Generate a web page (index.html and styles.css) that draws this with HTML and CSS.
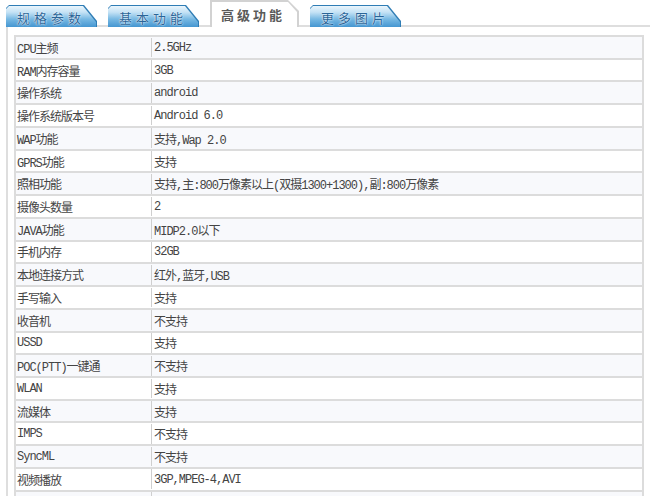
FILE: index.html
```html
<!DOCTYPE html>
<html lang="zh">
<head>
<meta charset="utf-8">
<title>参数</title>
<link rel="stylesheet" href="styles.css">
</head>
<body>
<div class="tabs">
  <div class="tab"><span class="tab-face">规格参数</span></div>
  <div class="tab"><span class="tab-face">基本功能</span></div>
  <div class="tab tab-active"><span class="tab-face">高级功能</span></div>
  <div class="tab"><span class="tab-face">更多图片</span></div>
</div>
<div class="panel">
  <div class="spec">
    <div class="row"><div class="k">CPU主频</div><div class="v">2.5GHz</div></div>
    <div class="row"><div class="k">RAM内存容量</div><div class="v">3GB</div></div>
    <div class="row"><div class="k">操作系统</div><div class="v">android</div></div>
    <div class="row"><div class="k">操作系统版本号</div><div class="v">Android 6.0</div></div>
    <div class="row"><div class="k">WAP功能</div><div class="v">支持,Wap 2.0</div></div>
    <div class="row"><div class="k">GPRS功能</div><div class="v">支持</div></div>
    <div class="row"><div class="k">照相功能</div><div class="v">支持,主:800万像素以上(双摄1300+1300),副:800万像素</div></div>
    <div class="row"><div class="k">摄像头数量</div><div class="v">2</div></div>
    <div class="row"><div class="k">JAVA功能</div><div class="v">MIDP2.0以下</div></div>
    <div class="row"><div class="k">手机内存</div><div class="v">32GB</div></div>
    <div class="row"><div class="k">本地连接方式</div><div class="v">红外,蓝牙,USB</div></div>
    <div class="row"><div class="k">手写输入</div><div class="v">支持</div></div>
    <div class="row"><div class="k">收音机</div><div class="v">不支持</div></div>
    <div class="row"><div class="k">USSD</div><div class="v">支持</div></div>
    <div class="row"><div class="k">POC(PTT)一键通</div><div class="v">不支持</div></div>
    <div class="row"><div class="k">WLAN</div><div class="v">支持</div></div>
    <div class="row"><div class="k">流媒体</div><div class="v">支持</div></div>
    <div class="row"><div class="k">IMPS</div><div class="v">不支持</div></div>
    <div class="row"><div class="k">SyncML</div><div class="v">不支持</div></div>
    <div class="row"><div class="k">视频播放</div><div class="v">3GP,MPEG-4,AVI</div></div>
    <div class="row"><div class="k"></div><div class="v"></div></div>
  </div>
</div>
</body>
</html>
```
FILE: styles.css
```css
html, body {
  margin: 0;
  padding: 0;
  background: #ffffff;
  overflow: hidden;
}
body {
  width: 650px;
  height: 496px;
  font-family: "Liberation Mono", "Noto Sans CJK SC", monospace;
  font-size: 12px;
  color: #444444;
}
.tabs {
  display: flex;
  align-items: flex-end;
  gap: 11px;
  height: 27px;
  padding-left: 6px;
  position: relative;
  z-index: 2;
  margin-bottom: -2px;
}
.tab {
  width: 91px;
  height: 22px;
  background: #2f7db5;
  clip-path: polygon(3px 0, 78px 0, 100% 16px, 100% 100%, 0 100%, 0 3px);
  display: flex;
}
.tab-face {
  flex: 1;
  margin: 1px 1px 0 0;
  background: linear-gradient(#eaf5fc 0%, #c4e2f5 30%, #78b9e3 62%, #4596d1 100%);
  clip-path: polygon(3px 0, 77px 0, 100% 16px, 100% 100%, 0 100%, 0 3px);
  display: flex;
  align-items: center;
  padding-left: 11px;
  padding-top: 1px;
  font-family: "Noto Sans CJK SC", sans-serif;
  font-size: 13px;
  letter-spacing: 4px;
  color: #2a6598;
  text-shadow: 0 0 1px #ffffff, 0 0 2px #e8f4fc;
}
.tab-active {
  width: 89px;
  height: 27px;
  background: #d2d2d2;
  clip-path: polygon(0 0, 78px 0, 100% 11px, 100% 100%, 0 100%);
}
.tab-active .tab-face {
  margin: 2px 2px 0 2px;
  background: #ffffff;
  clip-path: polygon(0 0, 76px 0, 100% 10px, 100% 100%, 0 100%);
  padding-left: 9px;
  padding-top: 0;
  font-weight: bold;
  letter-spacing: 3px;
  color: #5a5a5a;
  text-shadow: none;
}
.panel {
  margin-left: 6px;
  border-top: 2px solid #dedede;
  border-left: 2px solid #dedede;
  padding: 8px 0 0 6px;
}
.spec {
  width: 630px;
  box-sizing: border-box;
  border: 2px solid #dcdcdc;
  border-bottom: none;
}
.row {
  display: grid;
  grid-template-columns: 136px 1fr;
  height: 22.74px;
  box-sizing: border-box;
  border-bottom: 2px solid #dcdcdc;
  align-items: center;
  letter-spacing: -1px;
  white-space: nowrap;
  padding-top: 1px;
}
.row:nth-child(odd) {
  background: #f8f9fc;
}
.k {
  padding-left: 1px;
  height: 100%;
  margin-top: -1px;
  padding-top: 1px;
  box-sizing: border-box;
  display: flex;
  align-items: center;
  border-right: 1px solid #cfcfcf;
}
.v {
  padding-left: 2px;
}
```
